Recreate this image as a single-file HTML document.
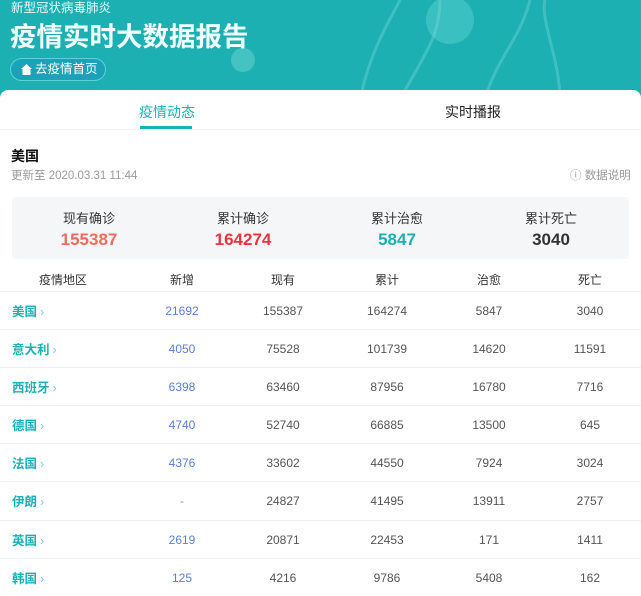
<!DOCTYPE html>
<html><head><meta charset="utf-8"><style>
*{margin:0;padding:0;box-sizing:border-box}
body{width:641px;height:591px;overflow:hidden;background:#fff;font-family:"Liberation Sans","Noto Sans CJK SC",sans-serif;position:relative}
.hdr{position:absolute;left:0;top:0;width:641px;height:100px;background:#1db0b3}
.sub{position:absolute;left:11px;top:0;color:#e6fafa;font-size:12.5px;line-height:16px}
.title{position:absolute;left:10px;top:20px;color:#f0ffff;font-size:26.5px;font-weight:bold;line-height:34px}
.btn{position:absolute;left:10px;top:58px;width:96px;height:23px;border-radius:12px;background:#1ba2b8;border:1px solid #5fd0d8;color:#fff;font-size:12.5px;line-height:21px;padding-left:24px}
.btn svg{position:absolute;left:10px;top:5px}
.card{position:absolute;left:0;top:90px;width:641px;height:501px;background:#fff;border-radius:8px 8px 0 0}
.tab{position:absolute;top:12px;font-size:14px;color:#222;line-height:20px}
.ul{position:absolute;left:140px;top:36px;width:52px;height:3px;background:#1db0b3}
.tline{position:absolute;left:0;top:39px;width:641px;height:1px;background:#f2f2f2}
.abs{position:absolute}
.box{position:absolute;left:12px;top:107px;width:617px;height:62px;background:#f5f6f7;border-radius:3px}
.bc{position:absolute;width:154px;text-align:center}
.bl{top:11px;font-size:13px;color:#333}
.bn{top:33px;font-size:17px;font-weight:bold}
.th{position:absolute;top:181px;font-size:12px;color:#333;width:100px;text-align:center}
.row{position:absolute;left:0;width:641px;height:38px;border-top:1px solid #f0f0f0}
.c{position:absolute;top:12px;width:100px;text-align:center;font-size:12px;color:#555}
.n{position:absolute;left:12px;top:9px;font-size:12.5px;color:#1db0b3;font-weight:bold}
.n span{color:#7fd0d3;font-weight:normal;margin-left:3px}
</style></head><body>
<div class="hdr">
<svg width="641" height="100" style="position:absolute;left:0;top:0">
<g fill="none" stroke="#8ee0e0" stroke-opacity=".3" stroke-width="3">
<path d="M360 100 C370 50 390 20 400 0"/><path d="M400 100 C420 60 440 40 440 0"/>
<path d="M485 100 C495 60 520 40 530 0"/><path d="M560 100 C560 60 540 20 545 0"/>
</g>
<circle cx="450" cy="20" r="24" fill="#7fe3e0" fill-opacity=".3"/>
<circle cx="243" cy="60" r="12" fill="#8fe8e0" fill-opacity=".35"/>
</svg>
<div class="sub">新型冠状病毒肺炎</div>
<div class="title">疫情实时大数据报告</div>
<div class="btn"><svg width="11" height="11" viewBox="0 0 11 11"><path d="M5.5 0 L11 5 L9.5 5 L9.5 11 L1.5 11 L1.5 5 L0 5 Z" fill="#fff"/></svg>去疫情首页</div>
</div>
<div class="card">
<div class="tab" style="left:139px;color:#1db0b3">疫情动态</div>
<div class="tab" style="left:445px">实时播报</div>
<div class="ul"></div><div class="tline"></div>
<div class="abs" style="left:11px;top:56px;font-size:14px;font-weight:bold;color:#111">美国</div>
<div class="abs" style="left:11px;top:77px;font-size:11.5px;color:#999">更新至 2020.03.31 11:44</div>
<div class="abs" style="left:570px;top:77px;font-size:11.5px;color:#999">ⓘ 数据说明</div>
<div class="box">
<div class="bc bl" style="left:0">现有确诊</div><div class="bc bn" style="left:0;color:#f46a5e">155387</div>
<div class="bc bl" style="left:154px">累计确诊</div><div class="bc bn" style="left:154px;color:#e8343e">164274</div>
<div class="bc bl" style="left:308px">累计治愈</div><div class="bc bn" style="left:308px;color:#1db0b3">5847</div>
<div class="bc bl" style="left:462px">累计死亡</div><div class="bc bn" style="left:462px;color:#333">3040</div>
</div>
<div class="th" style="left:13px">疫情地区</div>
<div class="th" style="left:132px">新增</div>
<div class="th" style="left:233px">现有</div>
<div class="th" style="left:337px">累计</div>
<div class="th" style="left:439px">治愈</div>
<div class="th" style="left:540px">死亡</div>
</div>
<div class="row" style="top:291px"><div class="n">美国<span>›</span></div><div class="c" style="left:132px;color:#5a7ed6">21692</div><div class="c" style="left:233px">155387</div><div class="c" style="left:337px">164274</div><div class="c" style="left:439px">5847</div><div class="c" style="left:540px">3040</div></div>
<div class="row" style="top:329px"><div class="n">意大利<span>›</span></div><div class="c" style="left:132px;color:#5a7ed6">4050</div><div class="c" style="left:233px">75528</div><div class="c" style="left:337px">101739</div><div class="c" style="left:439px">14620</div><div class="c" style="left:540px">11591</div></div>
<div class="row" style="top:367px"><div class="n">西班牙<span>›</span></div><div class="c" style="left:132px;color:#5a7ed6">6398</div><div class="c" style="left:233px">63460</div><div class="c" style="left:337px">87956</div><div class="c" style="left:439px">16780</div><div class="c" style="left:540px">7716</div></div>
<div class="row" style="top:405px"><div class="n">德国<span>›</span></div><div class="c" style="left:132px;color:#5a7ed6">4740</div><div class="c" style="left:233px">52740</div><div class="c" style="left:337px">66885</div><div class="c" style="left:439px">13500</div><div class="c" style="left:540px">645</div></div>
<div class="row" style="top:443px"><div class="n">法国<span>›</span></div><div class="c" style="left:132px;color:#5a7ed6">4376</div><div class="c" style="left:233px">33602</div><div class="c" style="left:337px">44550</div><div class="c" style="left:439px">7924</div><div class="c" style="left:540px">3024</div></div>
<div class="row" style="top:481px"><div class="n">伊朗<span>›</span></div><div class="c" style="left:132px;color:#999">-</div><div class="c" style="left:233px">24827</div><div class="c" style="left:337px">41495</div><div class="c" style="left:439px">13911</div><div class="c" style="left:540px">2757</div></div>
<div class="row" style="top:520px"><div class="n">英国<span>›</span></div><div class="c" style="left:132px;color:#5a7ed6">2619</div><div class="c" style="left:233px">20871</div><div class="c" style="left:337px">22453</div><div class="c" style="left:439px">171</div><div class="c" style="left:540px">1411</div></div>
<div class="row" style="top:558px"><div class="n">韩国<span>›</span></div><div class="c" style="left:132px;color:#5a7ed6">125</div><div class="c" style="left:233px">4216</div><div class="c" style="left:337px">9786</div><div class="c" style="left:439px">5408</div><div class="c" style="left:540px">162</div></div>
</body></html>
